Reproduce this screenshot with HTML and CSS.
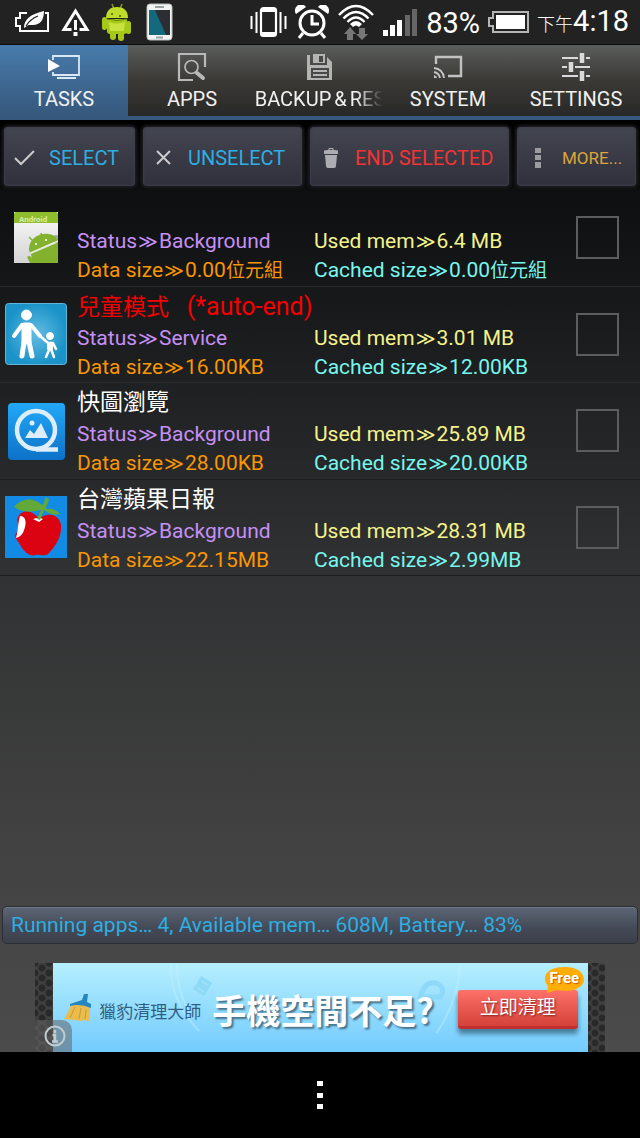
FILE: index.html
```html
<!DOCTYPE html>
<html lang="zh-Hant">
<head>
<meta charset="utf-8">
<meta name="viewport" content="width=device-width, initial-scale=1">
<title>Task manager</title>
<link rel="stylesheet" href="styles.css">
</head>
<body>
<header class="status-bar">
  <div class="status-icons">
    <svg width="35" height="24" viewBox="0 0 35 24" fill="none" stroke="#fff" stroke-width="2"><path d="M12 3H5v5H1v8h4v5h28V3h-3"/><path d="M9 18c0-9 7-14 20-17 0 9-4 14-11 14-3 0-5-.5-6 1z" fill="#fff" stroke="none"/><path d="M11 16c3-5 7-8 12-10" stroke="#222" stroke-width="1.2"/></svg>
    <svg width="29" height="28" viewBox="0 0 29 28" fill="none" stroke="#fff" stroke-width="3"><path d="M10.500 21.500H3L14.500 3 26 21.500h-7.500M14.500 12v10"/><path d="M12.500 24h4v4h-4z" fill="#fff" stroke="none"/></svg>
    <svg class="droid" width="29" height="38" viewBox="0 0 29 38"><path d="M10 1l2 5M20 1l-2 5" stroke="#829b12" stroke-width="1.500"/><g fill="#a6c818"><path d="M4 15C4 7 9 4 15 4s11 3 11 11z" fill="#bfdc2a"/><path d="M5 16h20v12q0 3-3 3H8q-3 0-3-3z"/><rect y="14" width="5" height="13" rx="2.500"/><rect x="24" y="18" width="5" height="13" rx="2.500"/><rect x="8" y="28" width="6" height="9" rx="3"/><rect x="16" y="28" width="6" height="10" rx="3"/></g><path d="M7 19q8 3 16 0l-1 9H8z" fill="#c8e33e"/><path d="M5 16q10 3 20 0" fill="none" stroke="#6c830e"/><circle cx="10" cy="11" r="1" fill="#445409"/><circle cx="18" cy="13" r="1" fill="#445409"/></svg>
    <svg width="27" height="38" viewBox="0 0 27 38"><rect x="1" y="1" width="25" height="36" rx="3" fill="#f3f5f5" stroke="#b9bdbd"/><path fill="#2c2e33" d="M3 7h21v25H3z"/><path fill="#14697d" d="M3 7h6l11 25H3z"/><path d="M9 4h9M10 34.500h7" stroke="#9ca2a3" stroke-width="2"/></svg>
  </div>
  <div class="status-info">
    <svg width="37" height="32" viewBox="0 0 37 32" fill="none" stroke="#fff" stroke-width="2"><rect x="11" y="2" width="15" height="28" rx="2.500" stroke-width="2.200"/><path d="M11 4.500h15M11 27.500h15" stroke-width="3"/><path d="M6.500 6v21M1.500 10v13M30.500 6v21M35.500 10v13"/></svg>
    <svg width="34" height="34" viewBox="0 0 34 34" fill="none" stroke="#fff" stroke-width="3"><circle cx="17" cy="18" r="12"/><path d="M17 10v9h7M8 28l-4 5M26 28l4 5"/><path d="M1 9a6 6 0 0 1 10-7zM33 9a6 6 0 0 0-10-7z" fill="#fff" stroke="none"/></svg>
    <svg width="38" height="36" viewBox="0 0 38 36" fill="none" stroke="#fff" stroke-width="2.500"><path d="M2 11q17-18 34 0M6.500 14.500q12.500-13 25 0M10.500 18q8.500-9 17 0"/><path d="M13 20q6-6 12 0l-3 3q-3-3-6 0z" fill="#fff" stroke="none"/><path d="M13 23l6 7h-3v6h-6v-6H7zM22 24h6v6h3l-6 6-6-6h3z" fill="#777" stroke="none"/></svg>
    <svg width="34" height="27" viewBox="0 0 34 27"><path fill="#fff" d="M0 21h5v6H0zM7 16h5v11H7zM14 11h5v16h-5z"/><path fill="#666" d="M22 6h5v21h-5zM29 0h5v27h-5z"/></svg>
    <span class="percent">83%</span>
    <svg width="41" height="22" viewBox="0 0 41 22"><path d="M5 1h35v20H5v-6H1V7h4z" fill="none" stroke="#b5b5b5" stroke-width="2"/><path fill="#fff" d="M8 4h29v14H8z"/></svg>
    <time class="clock"><span class="meridiem">下午</span>4:18</time>
  </div>
</header>

<nav class="tabs">
  <button class="tab tab-active" type="button">
    <svg width="34" height="26" viewBox="0 0 34 26" fill="none" stroke="#d8e8f5" stroke-width="1.800"><path d="M6 6V2h26v19H6v-3M10 24h19"/><path d="M1 5l12 7-12 6z" fill="#fff" stroke="none"/></svg>
    <span>TASKS</span>
  </button>
  <button class="tab" type="button">
    <svg width="30" height="30" viewBox="0 0 30 30" fill="none" stroke="#b9b9b9" stroke-width="2.200"><path d="M16 28H2V2h26v13"/><circle cx="14.500" cy="15" r="6.500" stroke-width="1.700"/><path d="M20 21l6 5" stroke-width="4" stroke-linecap="round"/></svg>
    <span>APPS</span>
  </button>
  <button class="tab" type="button">
    <svg width="26" height="26" viewBox="0 0 26 26"><path fill="#b4b4b4" d="M0 1h3v10h17V3l5 5v18H0z"/><path fill="#b4b4b4" d="M6 0h12v9H6z"/><path fill="#484846" d="M12 2h4v6h-4zM4 14h18v10H4z"/><path fill="#b4b4b4" d="M6 16h14v2H6zM6 20h14v2H6z"/></svg>
    <span class="fade">BACKUP<span class="amp">&amp;</span>RES</span>
  </button>
  <button class="tab" type="button">
    <svg width="30" height="24" viewBox="0 0 30 24" fill="none" stroke="#c2c2c2" stroke-width="2.400"><path d="M3 9V2h25v19H15"/><path d="M1 13q9 1 10 10M1 17q5 1 6 6" stroke-width="1.900"/><path d="M1 20q3 1 3 3H1z" fill="#c2c2c2" stroke="none"/></svg>
    <span>SYSTEM</span>
  </button>
  <button class="tab" type="button">
    <svg width="28" height="28" viewBox="0 0 28 28" stroke="#dadada" stroke-width="2"><path d="M0 5h16M24 5h4M0 14h5M13 14h15M0 23h16M24 23h4"/><path d="M20 0v10M9 9v10M20 18v10" stroke-width="4.500"/></svg>
    <span>SETTINGS</span>
  </button>
</nav>

<main class="content">
  <div class="actions">
    <button class="action" type="button">
      <svg width="22" height="18" viewBox="0 0 22 18" fill="none" stroke="#ccc" stroke-width="2"><path d="M1 9l6 6L20 2"/></svg>
      <span>SELECT</span>
    </button>
    <button class="action" type="button">
      <svg width="22" height="18" viewBox="0 0 22 18" fill="none" stroke="#ccc" stroke-width="2"><path d="M4 2l13 13M17 2L4 15"/></svg>
      <span>UNSELECT</span>
    </button>
    <button class="action action-end" type="button">
      <svg width="22" height="20" viewBox="0 0 22 20" fill="#adadb1"><path d="M4 3q0-1 4-1l1-2h4l1 2q4 0 4 1v3H4zM5 7h12l-1 11q0 2-2 2H8q-2 0-2-2z"/><path d="M9.500 1.500h3" stroke="#444"/></svg>
      <span>END SELECTED</span>
    </button>
    <button class="action action-more" type="button">
      <svg width="22" height="20" viewBox="0 0 22 20" fill="#9b9ba0"><path d="M8 0h6v5H8zM8 7h6v5H8zM8 14h6v6H8z"/></svg>
      <span>MORE...</span>
    </button>
  </div>

  <ul class="tasks">
    <li class="task">
      <svg class="app-icon" viewBox="0 0 62 62"><defs><linearGradient id="paper" x2="0" y2="1"><stop stop-color="#fafafa"/><stop offset="1" stop-color="#d4d4d4"/></linearGradient><clipPath id="sheet"><path d="M9 5h44v51H9z"/></clipPath></defs><path fill="url(#paper)" d="M9 5h44v51H9z"/><path fill="#8fbd2e" d="M9 7q0-2 2-2h40q2 0 2 2v9H9z"/><text x="14" y="15" class="icon-word">Android</text><g clip-path="url(#sheet)"><circle cx="51" cy="32" r="4" fill="#aaa"/><path fill="#83b32e" d="M24 43c-1-16 22-22 29-10L25 46zM26 47l28-12v22H28zM22 50q2-2 4 0l5 6h-6z"/><path d="M24 30l5 5M36 26l1 5" stroke="#83b32e" stroke-width="1.500"/><path d="M25 46l28-12" stroke="#e9f1d9" stroke-width="1.200"/><circle cx="31" cy="37" r="1" fill="#fff"/><circle cx="41" cy="33" r="1" fill="#fff"/></g></svg>
      <label class="title" for="t1"></label>
      <p class="status">Status<span class="sep">≫</span>Background</p><p class="used">Used mem<span class="sep">≫</span>6.4 MB</p>
      <p class="data">Data size<span class="sep">≫</span>0.00<span class="unit">位元組</span></p><p class="cached">Cached size<span class="sep">≫</span>0.00<span class="unit">位元組</span></p>
      <input class="check" id="t1" type="checkbox" aria-label="Select task">
    </li>
    <li class="task">
      <svg class="app-icon" viewBox="0 0 62 62"><defs><radialGradient id="glow"><stop stop-color="#64bde3"/><stop offset="1" stop-color="#1b93c8"/></radialGradient></defs><rect x=".5" y=".5" width="61" height="61" rx="3" fill="url(#glow)" stroke="#64b4d8"/><g fill="#fff" stroke="#fff" stroke-linecap="round" stroke-linejoin="round"><circle cx="21.500" cy="12" r="5"/><path d="M19 22h5v17h-5z" stroke-width="5"/><path d="M17 22L9 33M26 22l9 11" fill="none" stroke-width="4"/><path d="M19 39l-2 14M24 39l3 14" fill="none" stroke-width="5"/><circle cx="45" cy="33" r="3.500"/><path d="M35 33l8 7h5l3 6M44 43v4l-3 7M46 46l3 8" fill="none" stroke-width="2.500"/><path d="M43 40h4v6h-4z" stroke-width="2"/></g></svg>
      <label class="title title-end" for="t2">兒童模式 <span class="note">(*auto-end)</span></label>
      <p class="status">Status<span class="sep">≫</span>Service</p><p class="used">Used mem<span class="sep">≫</span>3.01 MB</p>
      <p class="data">Data size<span class="sep">≫</span>16.00KB</p><p class="cached">Cached size<span class="sep">≫</span>12.00KB</p>
      <input class="check" id="t2" type="checkbox">
    </li>
    <li class="task">
      <svg class="app-icon" viewBox="0 0 62 62"><defs><linearGradient id="azure" x2="0" y2="1"><stop stop-color="#23a8f8"/><stop offset="1" stop-color="#0c72c8"/></linearGradient></defs><rect x="3" y="3" width="57" height="57" rx="4" fill="url(#azure)"/><g fill="none" stroke="#dceefb" stroke-width="4.500"><circle cx="31" cy="30" r="19"/><path d="M31 49.500h22"/></g><path d="M20 38l5-8 4 4 7-11 7 15z" fill="#dceefb"/><circle cx="27" cy="23" r="2.500" fill="#dceefb"/></svg>
      <label class="title" for="t3">快圖瀏覽</label>
      <p class="status">Status<span class="sep">≫</span>Background</p><p class="used">Used mem<span class="sep">≫</span>25.89 MB</p>
      <p class="data">Data size<span class="sep">≫</span>28.00KB</p><p class="cached">Cached size<span class="sep">≫</span>20.00KB</p>
      <input class="check" id="t3" type="checkbox">
    </li>
    <li class="task">
      <svg class="app-icon" viewBox="0 0 62 62"><path fill="#128be4" d="M0 0h62v62H0z"/><path fill="#db0312" d="M34 23c7-7 20-6 22 6 1 13-7 23-13 29-5 3-9 0-12 1-7 2-12-3-17-12-4-5-5-8-2-11 3-7-1-11 1-15 4-8 15-7 21 2z"/><path fill="#fff" d="M15 20c6 0 7 7 4 14-1 4-4 7-8 8 2-6 2-16 4-22zM28 23q6-2 10 0l-4 3z"/><path fill="#63a93a" d="M9 11c9-10 20-9 28-2 2-1 3-5 3-8l4 2c-1 4-3 7-3 10 6-1 11 1 14 5-7 2-12-1-16-4l-4 10-3-1 4-9c-9 2-18 3-27-3z"/></svg>
      <label class="title" for="t4">台灣蘋果日報</label>
      <p class="status">Status<span class="sep">≫</span>Background</p><p class="used">Used mem<span class="sep">≫</span>28.31 MB</p>
      <p class="data">Data size<span class="sep">≫</span>22.15MB</p><p class="cached">Cached size<span class="sep">≫</span>2.99MB</p>
      <input class="check" id="t4" type="checkbox">
    </li>
  </ul>

  <p class="summary">Running apps… 4, Available mem… 608M, Battery… 83%</p>

  <aside class="ad">
    <div class="banner">
      <svg class="banner-art" viewBox="0 0 534 89" preserveAspectRatio="none" fill="none"><path d="M118 0Q116 38 146 68M124 0Q123 28 137 50M407 0Q405 38 383 70" stroke="#c6f2fe" stroke-width="2" opacity=".4"/><path d="M148 13l11 7-8 13-11-7z" fill="#8edaf6"/><path d="M148 18l7 4M144 25l7 4" stroke="#9fe1f9" stroke-width="2"/><path d="M367 34q4-16 15-14 11 4 5 14z" stroke="#8ed8fa" stroke-width="5"/></svg>
      <svg class="broom" width="28" height="29" viewBox="0 0 28 29"><path d="M7 12q10-3 19 3 0 7-1 13l-5-1-4 1-5-1-11-1Q4 20 7 12z" fill="#e9bc4d"/><path d="M11 14L6 25M17 15l-2 11M22 17l-1 9" stroke="#be862e" stroke-width=".7"/><path d="M6 11l12-4 2-6 4 0-1 8 4 2v4Q16 10 6 13z" fill="#2587bd"/></svg>
      <span class="brand">獵豹清理大師</span>
      <strong class="headline">手機空間不足?</strong>
      <a class="cta" href="#clean">立即清理<span class="free"><svg class="bubble" viewBox="0 0 41 28"><path d="M4 20C-3 12 2 1 20 1s20 9 20 13-6 14-27 10L3 27z" fill="#ffad08"/></svg><span class="free-text">Free</span></span></a>
    </div>
    <button class="info" type="button" aria-label="Ad information"><svg width="22" height="22" viewBox="0 0 22 22" fill="none" stroke="#c3cdd0" stroke-width="2"><circle cx="11" cy="11" r="9.500"/><path d="M11 5v3M8.500 10H11v6M8 16.500h6" stroke-width="2.500"/></svg></button>
  </aside>
</main>

<footer class="nav-bar"><button class="menu" type="button" aria-label="Menu"><svg width="6" height="28" viewBox="0 0 6 28" fill="#fff"><path d="M0 0h6v5H0zM0 12h6v5H0zM0 23h6v5H0z"/></svg></button></footer>
</body>
</html>
```

FILE: styles.css
```css
* { box-sizing: border-box; }
body {
  margin: 0;
  min-height: 100vh;
  display: flex;
  flex-direction: column;
  background: #000;
  color: #fff;
  font-family: Roboto, "DejaVu Sans", "Noto Sans CJK TC", sans-serif;
}
button { margin: 0; padding: 0; border: 0; background: none; color: inherit; font: inherit; }
p, ul { margin: 0; padding: 0; }
svg { flex: none; display: block; }

.status-bar {
  height: 45px;
  padding: 0 11px 0 15px;
  display: flex;
  align-items: center;
  justify-content: space-between;
  background: #222;
  border-bottom: 1px solid #0c0c0c;
}
.status-icons { display: flex; align-items: center; gap: 11px; }
.droid { margin: 0 4px 0 1px; }
.status-info { display: flex; align-items: center; gap: 8px; }
.percent, .clock { padding-top: 2px; font-size: 29px; line-height: 44px; }
.percent { margin-left: 1px; }
.clock { white-space: nowrap; }
.meridiem { font-size: 18px; font-weight: 300; }

.tabs {
  display: grid;
  grid-template-columns: repeat(5, minmax(0, 1fr));
  height: 75px;
  background: linear-gradient(#5b5d5c, #3a3935 50%, #282828);
  border-bottom: 4px solid #36587c;
}
.tab {
  display: flex;
  flex-direction: column;
  align-items: center;
  color: #f1f1f1;
  font-size: 20px;
  line-height: 24px;
}
.tab svg { height: 30px; margin: 7px 0 5px; }
.tab-active { background: linear-gradient(#487bab, #36587c); }
.fade {
  white-space: nowrap;
  -webkit-mask-image: linear-gradient(90deg, #000 78%, transparent 98%);
  mask-image: linear-gradient(90deg, #000 78%, transparent 98%);
}
.amp { padding: 0 3px; }

.content {
  flex: 1;
  display: flex;
  flex-direction: column;
  background: linear-gradient(#080a0c, #111214 12%, #1e1f20 27%, #303132 48%, #424242 78%, #4b4b4b);
}
.actions {
  display: grid;
  grid-template-columns: 131fr 159fr 199fr 119fr;
  gap: 8px;
  padding: 7px 4px 4px;
  background: linear-gradient(#000, #0d0e10);
}
.action {
  display: flex;
  align-items: center;
  height: 59px;
  padding: 2px 10px 0;
  gap: 13px;
  border-radius: 4px;
  background: linear-gradient(#434550, #2f303b);
  box-shadow: 0 0 3px 2px #1d1d21, inset 0 0 2px 1px #3c3d49;
  color: #2eaee2;
  font-size: 20px;
  white-space: nowrap;
}
.action-end { color: #f53333; }
.action-more { color: #dca53c; font-size: 17px; }

.tasks {
  display: grid;
  grid-auto-rows: 1fr;
  height: 386px;
  list-style: none;
}
.task {
  display: grid;
  grid-template-columns: 62px 237px 1fr 45px;
  grid-template-rows: 37px 29px 29px;
  padding: 0 19px 0 5px;
  border-bottom: 1px solid #2a2b2c;
  font-size: 21px;
  line-height: 29px;
  white-space: nowrap;
}
.task:nth-child(n+3) { border-color: #1c1d1e; }
.app-icon { grid-column: 1; grid-row: 1 / 4; width: 62px; height: 62px; align-self: center; }
.icon-word { font-size: 8px; font-weight: 700; fill: #d9ecb0; }
.title { grid-column: 2 / 4; grid-row: 1; padding-top: 2px; font-size: 23px; line-height: 36px; margin-left: 10px; }
.title-end { color: #f50000; }
.note { margin-left: 12px; font-size: 25px; }
.status, .data { grid-column: 2; margin-left: 10px; }
.used, .cached { grid-column: 3; margin-left: 10px; }
.status { color: #c490f5; }
.used { color: #f4f38c; }
.data { color: #f89605; }
.cached { color: #77f6ee; }
.sep { padding: 0 1px; font-size: 19px; }
.unit { font-size: 19px; }
.check {
  grid-column: 4;
  grid-row: 1 / 4;
  align-self: center;
  appearance: none;
  width: 43px;
  height: 43px;
  margin: 0;
  border: 2px solid #5c5d5e;
  background: none;
}
.check:checked { background: #2eaee2; }

.summary {
  margin: auto 2px 19px;
  padding: 0 8px;
  border: 1px solid #2b2e35;
  border-radius: 5px;
  background: linear-gradient(#5c6676, #434955 60%, #3c404b);
  box-shadow: inset 0 1px #707988;
  color: #2eaee2;
  font-size: 21px;
  line-height: 36px;
}

.ad {
  position: relative;
  width: 89%;
  height: 89px;
  margin: 0 auto;
  padding: 0 17px 0 18px;
  background-color: #404040;
  background-image: radial-gradient(circle, #292929 3px, transparent 4px), radial-gradient(circle, #292929 3px, transparent 4px);
  background-size: 14px 10px;
  background-position: 0 0, 7px 5px;
}
.banner {
  position: relative;
  display: flex;
  align-items: center;
  height: 100%;
  padding: 0 10px 0 11px;
  background: linear-gradient(#b5effe, #73cbfe);
  white-space: nowrap;
}
.banner-art { position: absolute; inset: 0; width: 100%; height: 100%; }
.broom, .brand, .headline, .cta { position: relative; }
.brand { margin: 6px 11px 0 7px; color: #315e80; font-size: 17px; }
.headline { font-family: "Noto Sans CJK TC", sans-serif; font-size: 34px; line-height: 48px; margin-top: 4px; text-shadow: 2px 2px 2px #47718a; }
.cta {
  width: 120px;
  margin: 4px 0 0 auto;
  border-radius: 3px;
  border-bottom: 3px solid #c32d30;
  background: linear-gradient(#fc716a, #d44238);
  box-shadow: 0 5px 5px #477d9c;
  color: #fff;
  font-size: 19px;
  line-height: 36px;
  text-align: center;
  text-decoration: none;
  text-shadow: 1px 1px 2px #802020;
}
.free {
  position: absolute;
  top: -24px;
  right: -7px;
  width: 41px;
  height: 28px;
  font-size: 15px;
  font-weight: 700;
  line-height: 25px;
}
.bubble { position: absolute; inset: 0; width: 100%; height: 100%; }
.free-text { position: relative; text-shadow: 1px 1px 1px #c65b00; }
.info {
  position: absolute;
  left: 0;
  bottom: 0;
  width: 37px;
  height: 32px;
  padding-left: 9px;
  border-radius: 0 10px 0 0;
  background: rgba(100, 100, 100, .55);
}

.nav-bar { display: flex; justify-content: center; align-items: center; height: 86px; background: #000; }
.menu { padding: 0 20px; }
```
